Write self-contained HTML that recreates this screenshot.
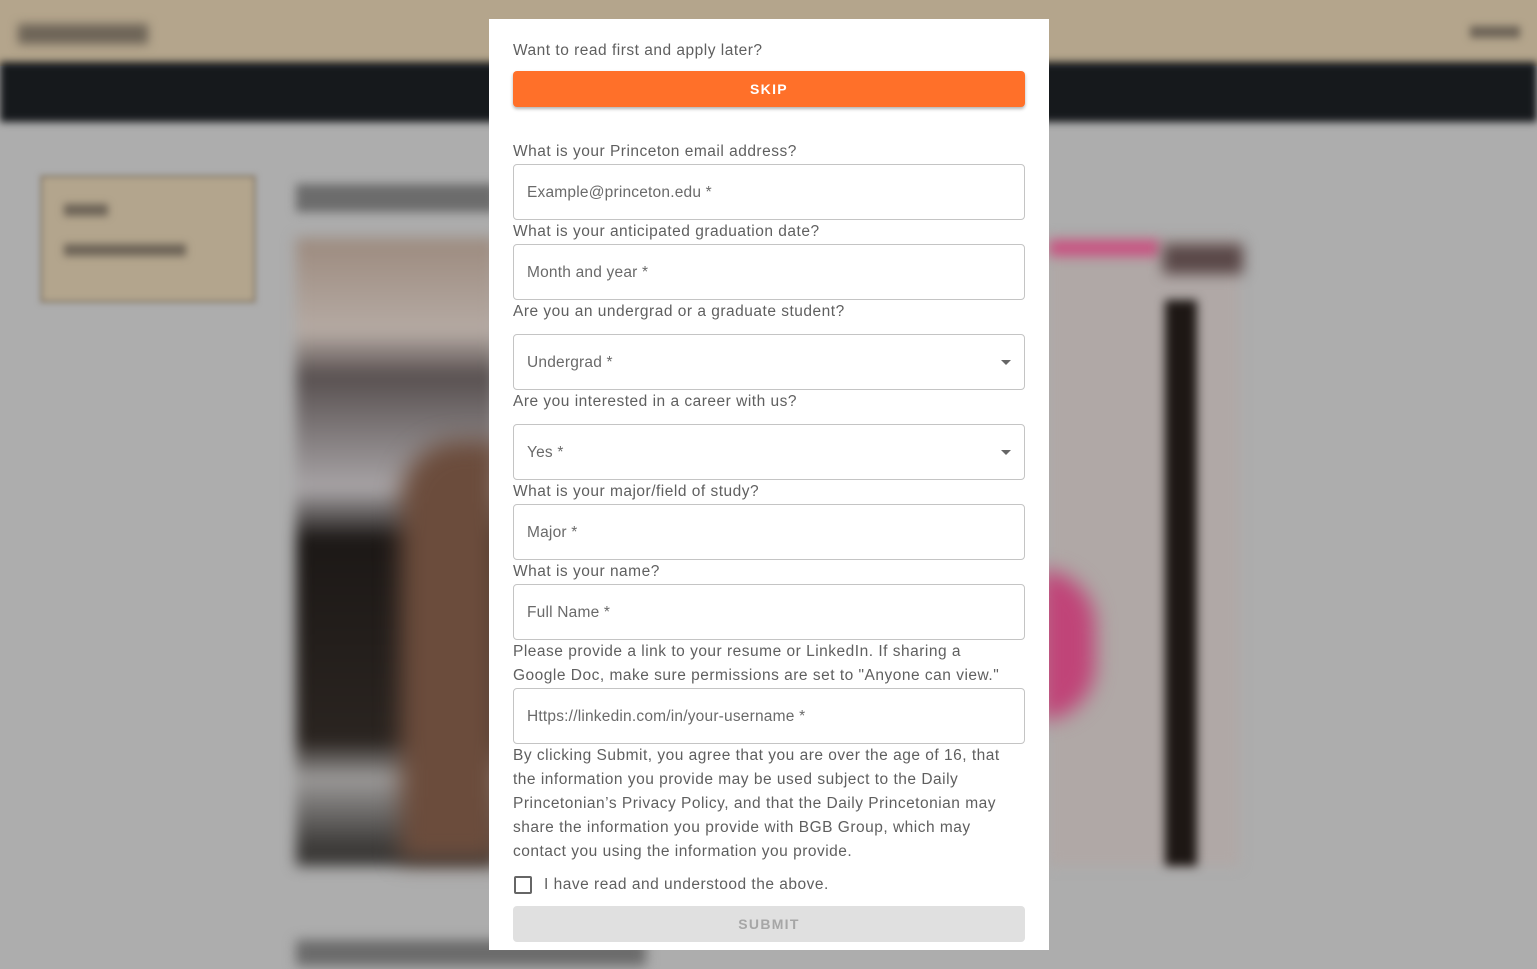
<!DOCTYPE html>
<html><head><meta charset="utf-8"><style>
*{box-sizing:border-box;margin:0;padding:0}
body{width:1537px;height:969px;overflow:hidden;background:#adadad;font-family:"Liberation Sans",sans-serif;position:relative}
.bg{position:absolute;filter:blur(6px)}
.a{position:absolute}
.m{position:absolute;left:489px;top:19px;width:560px;height:931px;background:#fff}
.t{position:absolute;left:513px;font-size:15.5px;color:#5f5f5f;letter-spacing:.5px;white-space:nowrap;line-height:24px}
.in{position:absolute;left:513px;width:512px;height:56px;border:1px solid #c4c4c4;border-radius:4px;font-size:15.5px;color:#6a6a6a;padding-left:13px;line-height:56px;letter-spacing:.2px}
.arr{position:absolute;right:13px;top:25px;width:0;height:0;border-left:5px solid transparent;border-right:5px solid transparent;border-top:5px solid #666}
</style></head><body>
<div class="a" style="left:0;top:0;width:1537px;height:66px;background:#b4a58c"></div>
<div class="a" style="left:0;top:62px;width:1537px;height:60px;background:#16191c;filter:blur(4px)"></div>
<div class="bg" style="left:18px;top:24px;width:130px;height:20px;background:#6e6558;filter:blur(5px)"></div>
<div class="bg" style="left:1470px;top:26px;width:50px;height:12px;background:#6e6558;filter:blur(4px)"></div>
<div class="bg" style="left:40px;top:175px;width:216px;height:128px;background:#b3a58d;border:3px solid #8d8272;filter:blur(3px)"></div>
<div class="bg" style="left:64px;top:204px;width:44px;height:12px;background:#6e6558;filter:blur(4px)"></div>
<div class="bg" style="left:64px;top:244px;width:122px;height:12px;background:#6e6558;filter:blur(4px)"></div>
<div class="bg" style="left:296px;top:184px;width:200px;height:28px;background:#6c6c6c;filter:blur(5px)"></div>
<div class="bg" style="left:296px;top:238px;width:200px;height:628px;background:linear-gradient(180deg,#9c8a7e 0,#b5aaa3 15%,#585050 22%,#a8a4a6 40%,#1c1816 48%,#2a2420 80%,#9c9a99 86%,#3c3a38 97%);filter:blur(7px)"></div>
<div class="bg" style="left:400px;top:440px;width:100px;height:420px;background:#6b4c3c;border-radius:60px 0 0 0;filter:blur(12px)"></div>
<div class="bg" style="left:296px;top:940px;width:350px;height:26px;background:#6b6b6b;filter:blur(6px)"></div>
<div class="bg" style="left:1049px;top:238px;width:190px;height:628px;background:#b0a8a6;filter:blur(6px)"></div>
<div class="bg" style="left:1049px;top:240px;width:110px;height:16px;background:#c85080;filter:blur(6px)"></div>
<div class="bg" style="left:1040px;top:570px;width:55px;height:150px;background:#c04478;border-radius:0 80px 80px 0;filter:blur(10px)"></div>
<div class="bg" style="left:1163px;top:244px;width:80px;height:30px;background:#5a4848;filter:blur(7px)"></div>
<div class="bg" style="left:1165px;top:300px;width:32px;height:566px;background:#1d1714;filter:blur(5px)"></div>
<div class="m"></div>
<div class="t" style="top:39px">Want to read first and apply later?</div>
<div class="a" style="left:513px;top:71px;width:512px;height:36px;background:#ff7029;border-radius:4px;box-shadow:0 2px 3px rgba(0,0,0,.3);color:#fff;font-size:14px;font-weight:bold;letter-spacing:1.3px;text-align:center;line-height:36px">SKIP</div>
<div class="t" style="top:140px">What is your Princeton email address?</div>
<div class="in" style="top:164px">Example@princeton.edu *</div>
<div class="t" style="top:220px">What is your anticipated graduation date?</div>
<div class="in" style="top:244px">Month and year *</div>
<div class="t" style="top:300px">Are you an undergrad or a graduate student?</div>
<div class="in" style="top:334px">Undergrad *<span class="arr"></span></div>
<div class="t" style="top:390px">Are you interested in a career with us?</div>
<div class="in" style="top:424px">Yes *<span class="arr"></span></div>
<div class="t" style="top:480px">What is your major/field of study?</div>
<div class="in" style="top:504px">Major *</div>
<div class="t" style="top:560px">What is your name?</div>
<div class="in" style="top:584px">Full Name *</div>
<div class="t" style="top:640px">Please provide a link to your resume or LinkedIn. If sharing a<br>Google Doc, make sure permissions are set to "Anyone can view."</div>
<div class="in" style="top:688px">Https://linkedin.com/in/your-username *</div>
<div class="t" style="top:744px">By clicking Submit, you agree that you are over the age of 16, that<br>the information you provide may be used subject to the Daily<br>Princetonian’s Privacy Policy, and that the Daily Princetonian may<br>share the information you provide with BGB Group, which may<br>contact you using the information you provide.</div>
<div class="a" style="left:514px;top:876px;width:18px;height:18px;border:2px solid #666;border-radius:2px"></div>
<div class="t" style="top:873px;left:544px">I have read and understood the above.</div>
<div class="a" style="left:513px;top:906px;width:512px;height:36px;background:#e0e0e0;border-radius:4px;color:#a6a6a6;font-size:14px;font-weight:bold;letter-spacing:1.3px;text-align:center;line-height:36px">SUBMIT</div>
</body></html>
